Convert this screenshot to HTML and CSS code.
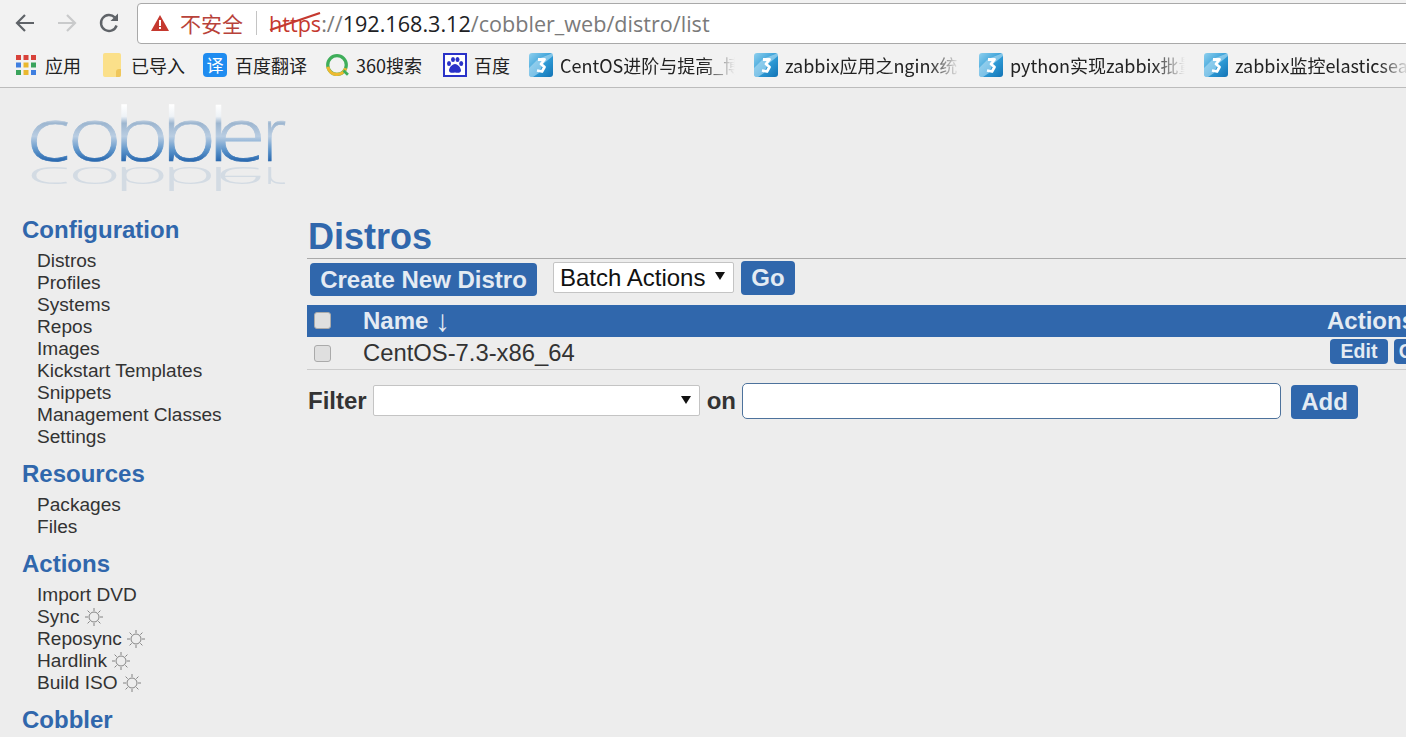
FILE: index.html
```html
<!DOCTYPE html>
<html lang="zh">
<head>
<meta charset="utf-8">
<title>Cobbler Web</title>
<link rel="stylesheet" href="styles.css">
</head>
<body>
<svg class="defs" width="0" height="0" aria-hidden="true">
  <defs>
    <linearGradient id="tile" x1="0" y1="0" x2="1" y2="1">
      <stop offset="0" stop-color="#8fd0ee"/><stop offset="0.55" stop-color="#2f9bd6"/><stop offset="1" stop-color="#1273b5"/>
    </linearGradient>
    <linearGradient id="logoFill" gradientUnits="userSpaceOnUse" x1="0" y1="-56" x2="0" y2="1">
      <stop offset="0" stop-color="#ffffff"/><stop offset="0.2" stop-color="#eef2f6"/><stop offset="0.32" stop-color="#9db6d0"/><stop offset="0.55" stop-color="#b9cde2"/><stop offset="0.8" stop-color="#5a92c9"/><stop offset="1" stop-color="#2565ad"/>
    </linearGradient>
    <symbol id="tile3" viewBox="0 0 24 24">
      <rect width="24" height="24" rx="3" fill="url(#tile)"/>
      <path d="M0 15 L9 6 L24 0 L24 3 L14 11 L10 20 L4 24 L3 24 Q0 24 0 21 Z" fill="#bfe4f5" opacity=".55"/>
      <polyline points="9,6.500 15.500,6.500 12,11 15.500,14 13,18.500 8,17.500" fill="none" stroke="#fff" stroke-width="2.800" stroke-linejoin="round"/>
    </symbol>
    <symbol id="sun" viewBox="0 0 18 18">
      <circle cx="9" cy="9" r="5" fill="none" stroke="#777" stroke-width=".9"/>
      <path d="M9 0v3M9 15v3M0 9h3M15 9h3M2.600 2.600l2.100 2.100M13.300 13.300l2.100 2.100M2.600 15.400l2.100-2.100M13.300 4.700l2.100-2.100" stroke="#777" stroke-width=".9" fill="none"/>
    </symbol>
  </defs>
</svg>

<header class="browser">
  <div class="toolbar">
    <svg class="nav-icon" viewBox="0 0 22 22"><path d="M20 11H3M11 3l-8 8 8 8" fill="none" stroke="#5f6368" stroke-width="2.200"/></svg>
    <svg class="nav-icon" viewBox="0 0 22 22"><path d="M2 11h17M11 3l8 8-8 8" fill="none" stroke="#c9cacb" stroke-width="2.200"/></svg>
    <svg class="nav-icon" viewBox="0 0 22 22"><path d="M18.600 13.500A8 8 0 1 1 16.800 5.400" fill="none" stroke="#5f6368" stroke-width="2.400"/><path d="M20 1.500V9h-7.500z" fill="#5f6368"/></svg>
    <div class="address">
      <svg class="warn" viewBox="0 0 18 16"><path d="M9 0l9 16H0z" fill="#c5392f"/><path d="M8 5h2v6H8zM8 12h2v2H8z" fill="#fff"/></svg>
      <span class="insecure">不安全</span>
      <span class="divider"></span>
      <span class="url"><span class="scheme">https<svg class="strike" viewBox="0 0 52 20"><path d="M1 18L51 1" stroke="#c5392f" stroke-width="2.200"/></svg></span><span class="dim">://</span>192.168.3.12<span class="dim">/cobbler_web/distro/list</span></span>
    </div>
  </div>
  <nav class="bookmarks">
    <a class="bm bm-apps">
      <svg class="bm-icon" viewBox="0 0 20 20">
        <rect x="0" y="0" width="5" height="5" fill="#d8423a"/><rect x="7.500" y="0" width="5" height="5" fill="#d8423a"/><rect x="15" y="0" width="5" height="5" fill="#d8423a"/>
        <rect x="0" y="7.500" width="5" height="5" fill="#3f7fe0"/><rect x="7.500" y="7.500" width="5" height="5" fill="#e9b82f"/><rect x="15" y="7.500" width="5" height="5" fill="#3aa35c"/>
        <rect x="0" y="15" width="5" height="5" fill="#3aa35c"/><rect x="7.500" y="15" width="5" height="5" fill="#e9b82f"/><rect x="15" y="15" width="5" height="5" fill="#3f7fe0"/>
      </svg><span>应用</span></a>
    <a class="bm bm-import">
      <svg class="bm-icon folder" viewBox="0 0 18 24"><path d="M2 0h14a2 2 0 0 1 2 2v20a2 2 0 0 1-2 2H2a2 2 0 0 1-2-2V2a2 2 0 0 1 2-2z" fill="#fbe08a"/><path d="M18 16v6a2 2 0 0 1-2 2h-3v-5q0-3 3-3z" fill="#efc65a"/></svg><span>已导入</span></a>
    <a class="bm bm-fanyi"><span class="yi">译</span><span>百度翻译</span></a>
    <a class="bm bm-360">
      <svg class="bm-icon" viewBox="0 0 22 22"><circle cx="11" cy="11" r="8.500" fill="none" stroke="#3fae5a" stroke-width="3"/><path d="M2.600 12.500A8.500 8.500 0 0 0 19 14" fill="none" stroke="#eeb92f" stroke-width="3"/><path d="M17 16l4 4" stroke="#3fae5a" stroke-width="2.500"/></svg><span>360搜索</span></a>
    <a class="bm bm-baidu">
      <svg class="bm-icon" viewBox="0 0 24 24"><rect x="1" y="1" width="22" height="22" fill="#fff" stroke="#2a32c8" stroke-width="2"/><ellipse cx="6" cy="10.500" rx="2" ry="2.600" fill="#2a32c8"/><ellipse cx="10" cy="6.500" rx="2" ry="2.600" fill="#2a32c8"/><ellipse cx="14.500" cy="6.500" rx="2" ry="2.600" fill="#2a32c8"/><ellipse cx="18.200" cy="10.500" rx="2" ry="2.600" fill="#2a32c8"/><path d="M12 11c-3 0-6 4-6 6.500 0 2.500 3 2.500 6 2 3 .5 6 .5 6-2C18 15 15 11 12 11z" fill="#2a32c8"/></svg><span>百度</span></a>
    <a class="bm bm-long"><svg class="bm-icon"><use href="#tile3"/></svg><span class="fade">CentOS进阶与提高_博</span></a>
    <a class="bm bm-long"><svg class="bm-icon"><use href="#tile3"/></svg><span class="fade">zabbix应用之nginx统</span></a>
    <a class="bm bm-long"><svg class="bm-icon"><use href="#tile3"/></svg><span class="fade">python实现zabbix批量</span></a>
    <a class="bm bm-long"><svg class="bm-icon"><use href="#tile3"/></svg><span class="fade">zabbix监控elasticsearch</span></a>
  </nav>
</header>

<div class="page">
  <div class="logo">
    <svg width="285" height="125" viewBox="0 0 285 125" role="img" aria-label="cobbler">
      <text class="logo-shadow" transform="translate(0 79) scale(1.25 -.42)" x="13 46 83 121 158.500 164" y="0">cobble</text>
      <text class="logo-shadow" transform="translate(253 79) scale(.8 -.42)" x="0" y="0">r</text>
      <text class="logo-word" transform="translate(0 73) scale(1.25 1)" x="13 46 83 121 158.500 164" y="0">cobble</text>
      <text class="logo-word" transform="translate(253 73) scale(.8 1)" x="0" y="0">r</text>
    </svg>
  </div>
  <div class="columns">
    <aside class="sidebar">
      <h2>Configuration</h2>
      <ul>
        <li>Distros</li><li>Profiles</li><li>Systems</li><li>Repos</li><li>Images</li><li>Kickstart Templates</li><li>Snippets</li><li>Management Classes</li><li>Settings</li>
      </ul>
      <h2>Resources</h2>
      <ul><li>Packages</li><li>Files</li></ul>
      <h2>Actions</h2>
      <ul>
        <li>Import DVD</li>
        <li>Sync <svg class="sun"><use href="#sun"/></svg></li>
        <li>Reposync <svg class="sun"><use href="#sun"/></svg></li>
        <li>Hardlink <svg class="sun"><use href="#sun"/></svg></li>
        <li>Build ISO <svg class="sun"><use href="#sun"/></svg></li>
      </ul>
      <h2>Cobbler</h2>
    </aside>
    <main class="content">
      <h1>Distros</h1>
      <div class="actions-bar">
        <a class="btn btn-create">Create New Distro</a>
        <div class="select select-batch"><select><option>Batch Actions</option></select></div>
        <a class="btn btn-go">Go</a>
      </div>
      <table class="list">
        <thead>
          <tr><th class="c-check"><input type="checkbox"></th><th class="c-name">Name <span class="arrow">↓</span></th><th class="c-actions">Actions</th></tr>
        </thead>
        <tbody>
          <tr><td class="c-check"><input type="checkbox"></td><td class="c-name">CentOS-7.3-x86_64</td><td class="c-actions"><a class="btn btn-small">Edit</a><a class="btn btn-small">Copy</a></td></tr>
        </tbody>
      </table>
      <form class="filter">
        <label>Filter</label>
        <div class="select select-filter"><select><option></option></select></div>
        <label>on</label>
        <input class="filter-input" type="text">
        <a class="btn btn-add">Add</a>
      </form>
    </main>
  </div>
</div>
</body>
</html>
```
FILE: styles.css
```css
html, body {
  margin: 0;
  padding: 0;
  height: 737px;
  overflow: hidden;
  background: #ededed;
}
body {
  width: 1406px;
  font-family: "Liberation Sans", Arial, sans-serif;
  color: #333;
}
.defs { position: absolute; }

/* browser chrome */
.browser {
  background: #f2f2f2;
  font-family: "Noto Sans", "Noto Sans CJK SC", sans-serif;
  overflow: hidden;
}
.toolbar {
  height: 40px;
  padding: 3px 0 1px 14px;
  display: flex;
  align-items: center;
}
.nav-icon {
  width: 22px;
  height: 22px;
  margin-right: 20px;
  flex: none;
}
.nav-icon:nth-child(3) { margin-right: 17px; }
.address {
  flex: 1;
  height: 39px;
  margin-right: -10px;
  background: #fff;
  border: 1px solid #a9a9a9;
  border-radius: 4px;
  display: flex;
  align-items: center;
  padding-left: 13px;
}
.warn { width: 18px; height: 16px; flex: none; margin-right: 11px; }
.insecure {
  font-family: "Noto Sans CJK SC", sans-serif;
  font-size: 21px;
  color: #b8423a;
  width: 64px;
  white-space: nowrap;
}
.divider {
  width: 1px;
  height: 24px;
  background: #c4c4c4;
  margin: 0 12px;
}
.url {
  font-size: 21.600px;
  color: #202124;
  white-space: nowrap;
  font-family: "Open Sans", "Noto Sans", sans-serif;
}
.dim { color: #7a7a7a; }
.scheme { color: #c5392f; position: relative; }
.strike {
  position: absolute;
  left: 0;
  top: 3px;
  width: 52px;
  height: 20px;
}
.bookmarks {
  height: 41px;
  padding: 0 0 2px 16px;
  border-bottom: 1px solid #bcbcbc;
  display: flex;
  align-items: center;
  font-size: 18px;
  color: #222;
  white-space: nowrap;
  font-family: "Noto Sans CJK SC", "Noto Sans", sans-serif;
}
.bm { display: flex; align-items: center; flex: none; }
.bm-icon { width: 24px; height: 24px; flex: none; margin-right: 7px; }
.bm-apps { width: 87px; }
.bm-apps .bm-icon { width: 20px; height: 20px; margin-right: 9px; }
.bm-import { width: 100px; }
.bm-import .bm-icon { width: 18px; margin-right: 10px; }
.bm-fanyi { width: 122px; }
.yi {
  width: 24px;
  height: 24px;
  line-height: 24px;
  background: #1f8cf0;
  border-radius: 4px;
  color: #fff;
  font-size: 17px;
  text-align: center;
  margin-right: 8px;
}
.bm-360 { width: 118px; }
.bm-360 .bm-icon { width: 24px; margin-right: 7px; }
.bm-baidu { width: 86px; }
.bm-long { width: 225px; }
.fade {
  width: 175px;
  overflow: hidden;
  -webkit-mask-image: linear-gradient(to right, #000 82%, transparent 100%);
  mask-image: linear-gradient(to right, #000 82%, transparent 100%);
}

/* page */
.page { width: 1600px; }
.logo {
  height: 129px;
  padding-left: 10px;
  box-sizing: border-box;
}
.logo svg { display: block; }
.logo-word {
  font-family: "Open Sans", sans-serif;
  font-weight: 300;
  font-size: 74px;
  fill: url(#logoFill);
  stroke: url(#logoFill);
  stroke-width: .7px;
}
.logo-shadow {
  font-family: "Open Sans", sans-serif;
  font-weight: 300;
  font-size: 74px;
  fill: #c3d0de;
  opacity: .6;
}
.columns { display: flex; }
.sidebar {
  width: 307px;
  flex: none;
  padding-left: 22px;
  box-sizing: border-box;
}
.sidebar h2 {
  margin: 13px 0 7px;
  font-size: 24px;
  line-height: 26px;
  font-weight: bold;
  color: #3067ac;
}
.sidebar h2:first-child { margin-top: 0; }
.sidebar ul {
  margin: 0;
  padding: 0 0 0 15px;
  list-style: none;
  font-size: 19.100px;
  line-height: 22px;
}
.sun { width: 18px; height: 18px; vertical-align: -3px; }
.content { flex: 1; }
.content h1 {
  margin: 0;
  padding-left: 1px;
  height: 41px;
  line-height: 40px;
  font-size: 36px;
  font-weight: bold;
  color: #3067ac;
  border-bottom: 1px solid #aaa;
}
.actions-bar {
  display: flex;
  align-items: center;
  height: 34px;
  padding: 2px 0 0 3px;
  margin-bottom: 10px;
}
.btn {
  display: inline-block;
  background: #3067ac;
  color: #e4ebf3;
  font-weight: bold;
  border-radius: 4px;
  text-align: center;
  box-sizing: border-box;
}
.btn-create {
  width: 227px;
  height: 33px;
  line-height: 33px;
  font-size: 24px;
  margin-right: 16px;
  margin-top: 2px;
}
.btn-go {
  width: 54px;
  height: 34px;
  line-height: 33px;
  font-size: 24px;
  margin-left: 7px;
}
.select { position: relative; display: inline-block; }
.select select {
  display: block;
  appearance: none;
  -webkit-appearance: none;
  width: 100%;
  height: 100%;
  border: 1px solid #c4c4c4;
  border-radius: 2px;
  background: #fff;
  font-family: "Liberation Sans", sans-serif;
  color: #111;
  padding: 0 0 0 6px;
}
.select::after {
  content: "";
  position: absolute;
  right: 9px;
  top: 50%;
  margin-top: -5px;
  border: 5px solid transparent;
  border-top: 8px solid #111;
  border-bottom: 0;
}
.select-batch { width: 181px; height: 31px; margin-top: -2px; }
.select-batch select { font-size: 24px; }
.select-filter { width: 327px; height: 31px; margin: -1px 7px 0 6px; }
.list {
  border-collapse: collapse;
  table-layout: fixed;
  width: 1300px;
}
.list th, .list td { padding: 0; text-align: left; white-space: nowrap; }
.list th {
  background: #3067ac;
  color: #e4ebf3;
  height: 31px;
  padding-bottom: 1px;
  font-size: 24px;
  font-weight: bold;
}
.list th input { margin-top: -1px; }
.list td {
  height: 32px;
  border-bottom: 1px solid #ccc;
  font-size: 23.800px;
  font-weight: normal;
  color: #333;
}
.arrow {
  font-weight: normal;
  font-family: "Liberation Sans", sans-serif;
  font-size: 30px;
  line-height: 1;
  vertical-align: -2px;
}
.c-check { width: 56px; }
.c-actions { width: 280px; }
.c-name { width: 964px; }
td.c-actions { padding-left: 3px; }
input[type="checkbox"] {
  appearance: none;
  -webkit-appearance: none;
  display: block;
  width: 17px;
  height: 17px;
  margin: 0 0 0 7px;
  background: #dfdfdf;
  border: 1px solid #aaa;
  border-radius: 3px;
  box-sizing: border-box;
}
.btn-small {
  width: 58px;
  height: 25px;
  line-height: 25px;
  font-size: 19.500px;
  margin: 0 6px 4px 0;
  vertical-align: middle;
}
.filter {
  display: flex;
  align-items: center;
  margin-top: 13px;
  height: 36px;
  padding-left: 1px;
  font-size: 24px;
  font-weight: bold;
  color: #333;
}
.filter-input {
  width: 539px;
  height: 36px;
  margin: 0 10px 0 6px;
  box-sizing: border-box;
  border: 1px solid #4d729c;
  border-radius: 5px;
  background: #fff;
}
.btn-add {
  width: 67px;
  height: 34px;
  line-height: 34px;
  margin-top: 2px;
  font-size: 24px;
}
```
